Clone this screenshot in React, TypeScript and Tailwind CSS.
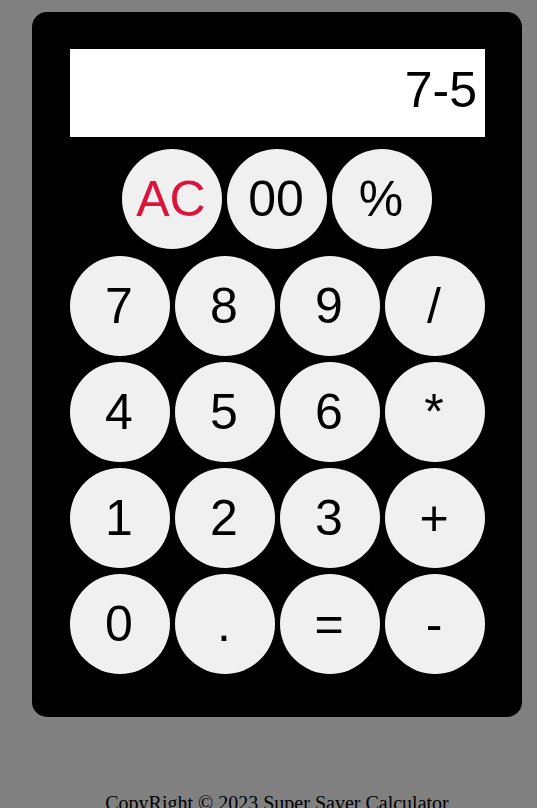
import React from "react";

const rows: string[][] = [
  ["7", "8", "9", "/"],
  ["4", "5", "6", "*"],
  ["1", "2", "3", "+"],
  ["0", ".", "=", "-"],
];

function Btn({ label, red }: { label: string; red?: boolean }) {
  return (
    <button
      className={
        "w-[100px] h-[100px] rounded-full bg-[#f0f0f0] flex items-center justify-center pr-[2px] text-[50px] leading-none " +
        (red ? "text-[#dc143c]" : "text-black")
      }
      style={{ fontFamily: '"Liberation Sans", Arial, sans-serif' }}
    >
      {label}
    </button>
  );
}

export default function App() {
  return (
    <div className="min-h-[808px] bg-[#808080] pt-[12px] overflow-hidden">
      <div className="ml-[32px] w-[490px] bg-black rounded-[15px] pt-[37px] pb-[43px] pl-[38px] pr-[37px]">
        <div
          className="h-[88px] bg-white flex items-center justify-end pr-[8px] pb-[6px] text-[50px] leading-none text-black"
          style={{ fontFamily: '"Liberation Sans", Arial, sans-serif' }}
        >
          7-5
        </div>
        <div className="mt-[12px] flex gap-[5px] pl-[52px]">
          <Btn label="AC" red />
          <Btn label="00" />
          <Btn label="%" />
        </div>
        <div className="mt-[7px] flex flex-col gap-[6px]">
          {rows.map((r, i) => (
            <div key={i} className="flex gap-[5px]">
              {r.map((k) => (
                <Btn key={k} label={k} />
              ))}
            </div>
          ))}
        </div>
      </div>
      <div
        className="mt-[71px] w-[490px] ml-[32px] text-center text-[20px] text-black"
        style={{ fontFamily: '"Liberation Serif", "Times New Roman", serif' }}
      >
        CopyRight © 2023 Super Saver Calculator
      </div>
    </div>
  );
}
